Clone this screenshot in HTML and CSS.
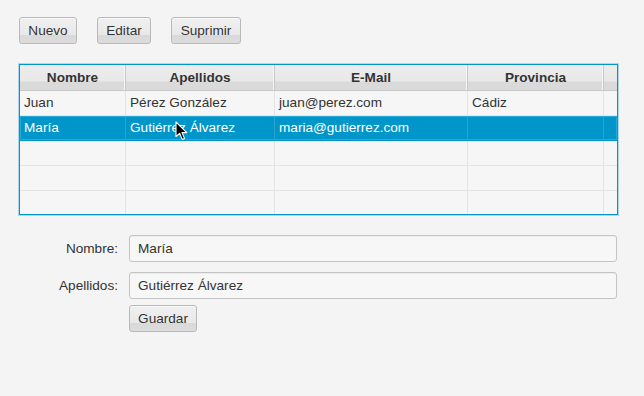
FILE: index.html
```html
<!DOCTYPE html>
<html lang="es">
<head>
<meta charset="utf-8">
<title>Personas</title>
<link rel="stylesheet" href="styles.css">
</head>
<body>
<div class="app">
  <div class="toolbar">
    <button class="btn btn-nuevo">Nuevo</button>
    <button class="btn btn-editar">Editar</button>
    <button class="btn btn-suprimir">Suprimir</button>
  </div>

  <div class="table">
    <div class="row head">
      <div class="cell">Nombre</div>
      <div class="cell">Apellidos</div>
      <div class="cell">E-Mail</div>
      <div class="cell">Provincia</div>
      <div class="cell filler"></div>
    </div>
    <div class="row">
      <div class="cell">Juan</div>
      <div class="cell">Pérez González</div>
      <div class="cell">juan@perez.com</div>
      <div class="cell">Cádiz</div>
      <div class="cell filler"></div>
    </div>
    <div class="row selected">
      <div class="cell">María</div>
      <div class="cell">Gutiérrez Álvarez</div>
      <div class="cell">maria@gutierrez.com</div>
      <div class="cell"></div>
      <div class="cell filler"></div>
    </div>
    <div class="row">
      <div class="cell"></div><div class="cell"></div><div class="cell"></div><div class="cell"></div><div class="cell filler"></div>
    </div>
    <div class="row">
      <div class="cell"></div><div class="cell"></div><div class="cell"></div><div class="cell"></div><div class="cell filler"></div>
    </div>
    <div class="row last">
      <div class="cell"></div><div class="cell"></div><div class="cell"></div><div class="cell"></div><div class="cell filler"></div>
    </div>
    <svg class="cursor" width="13" height="20" viewBox="0 0 13 20">
      <path d="M1 1 L1 15.5 L4.6 12.3 L7.2 18.4 L9.5 17.4 L7 11.6 L11.8 11.6 Z" fill="#000" stroke="#fff" stroke-width="1.1" stroke-linejoin="round"/>
    </svg>
  </div>

  <div class="form">
    <label class="label">Nombre:</label>
    <div class="input">María</div>
    <label class="label">Apellidos:</label>
    <div class="input">Gutiérrez Álvarez</div>
    <div></div>
    <div class="actions"><button class="btn btn-guardar">Guardar</button></div>
  </div>
</div>
</body>
</html>
```

FILE: styles.css
```css
* { box-sizing: border-box; }

html, body {
  margin: 0;
  padding: 0;
  background: #f4f4f4;
}

body {
  width: 644px;
  height: 396px;
  overflow: hidden;
  font-family: "Liberation Sans", Arial, sans-serif;
  font-size: 13.6px;
  color: #333;
}

.app {
  padding: 17px 27px 0 19px;
}

.toolbar {
  display: flex;
  gap: 20px;
  height: 27px;
}

.btn {
  font-family: "Liberation Sans", Arial, sans-serif;
  font-size: 13.6px;
  color: #333;
  height: 27px;
  padding: 0 6px;
  border: 1px solid #b9b9b9;
  border-radius: 3px;
  background: linear-gradient(#f0f0f0 0%, #e8e8e8 68%, #d9d9d9 70%, #dcdcdc 100%);
  box-shadow: inset 0 1px 0 #fbfbfb;
  margin: 0;
  line-height: 25px;
}

.btn-nuevo { width: 58px; }
.btn-editar { width: 54px; }
.btn-suprimir { width: 70px; }
.btn-guardar { width: 68px; }

.table {
  position: relative;
  margin-top: 20px;
  width: 599px;
  height: 151px;
  border: 1px solid #0096c9;
  box-shadow: 0 0 0 1px rgba(80, 180, 230, 0.45);
  background: #f6f6f6;
  overflow: hidden;
}

.row {
  display: grid;
  grid-template-columns: 106px 149px 193px 136px 13px;
  height: 25px;
  border-bottom: 1px solid #e4e4e4;
}

.row.last { border-bottom: none; height: 23px; }

.cell {
  border-right: 1px solid #e4e4e4;
  padding: 0 4px;
  line-height: 24px;
  white-space: nowrap;
  overflow: hidden;
}

.cell.filler { border-right: none; }

.row.head {
  height: 26px;
  border-bottom: 1px solid #c8c8c8;
  background: linear-gradient(#ececec 0%, #e8e8e8 65%, #dadada 67%, #dadada 100%);
}

.row.head .cell {
  font-weight: bold;
  text-align: center;
  line-height: 25px;
  border-right: 1px solid #c8c8c8;
  box-shadow: inset -1px 0 0 #f6f6f6;
}

.row.head .cell.filler { border-right: none; box-shadow: none; }

.row.selected {
  background: #0096c9;
  color: #fff;
  border-bottom: 1px solid #0096c9;
  box-shadow: inset 0 0 0 1px #2aa9d8;
}

.row.selected .cell {
  border-right: 1px solid #2aa5d2;
}

.row.selected .cell.filler { border-right: none; }

.cursor {
  position: absolute;
  left: 155px;
  top: 56px;
}

.form {
  margin-top: 20px;
  display: grid;
  grid-template-columns: 99px 1fr;
  column-gap: 11px;
  row-gap: 10px;
}

.label {
  text-align: right;
  line-height: 27px;
  color: #333;
}

.input {
  height: 27px;
  border: 1px solid #c4c4c4;
  border-radius: 3px;
  background: #f7f7f7;
  box-shadow: inset 0 1px 0 #ececec;
  padding: 0 8px;
  line-height: 25px;
  color: #333;
}

.actions {
  margin-top: -4px;
}
```
